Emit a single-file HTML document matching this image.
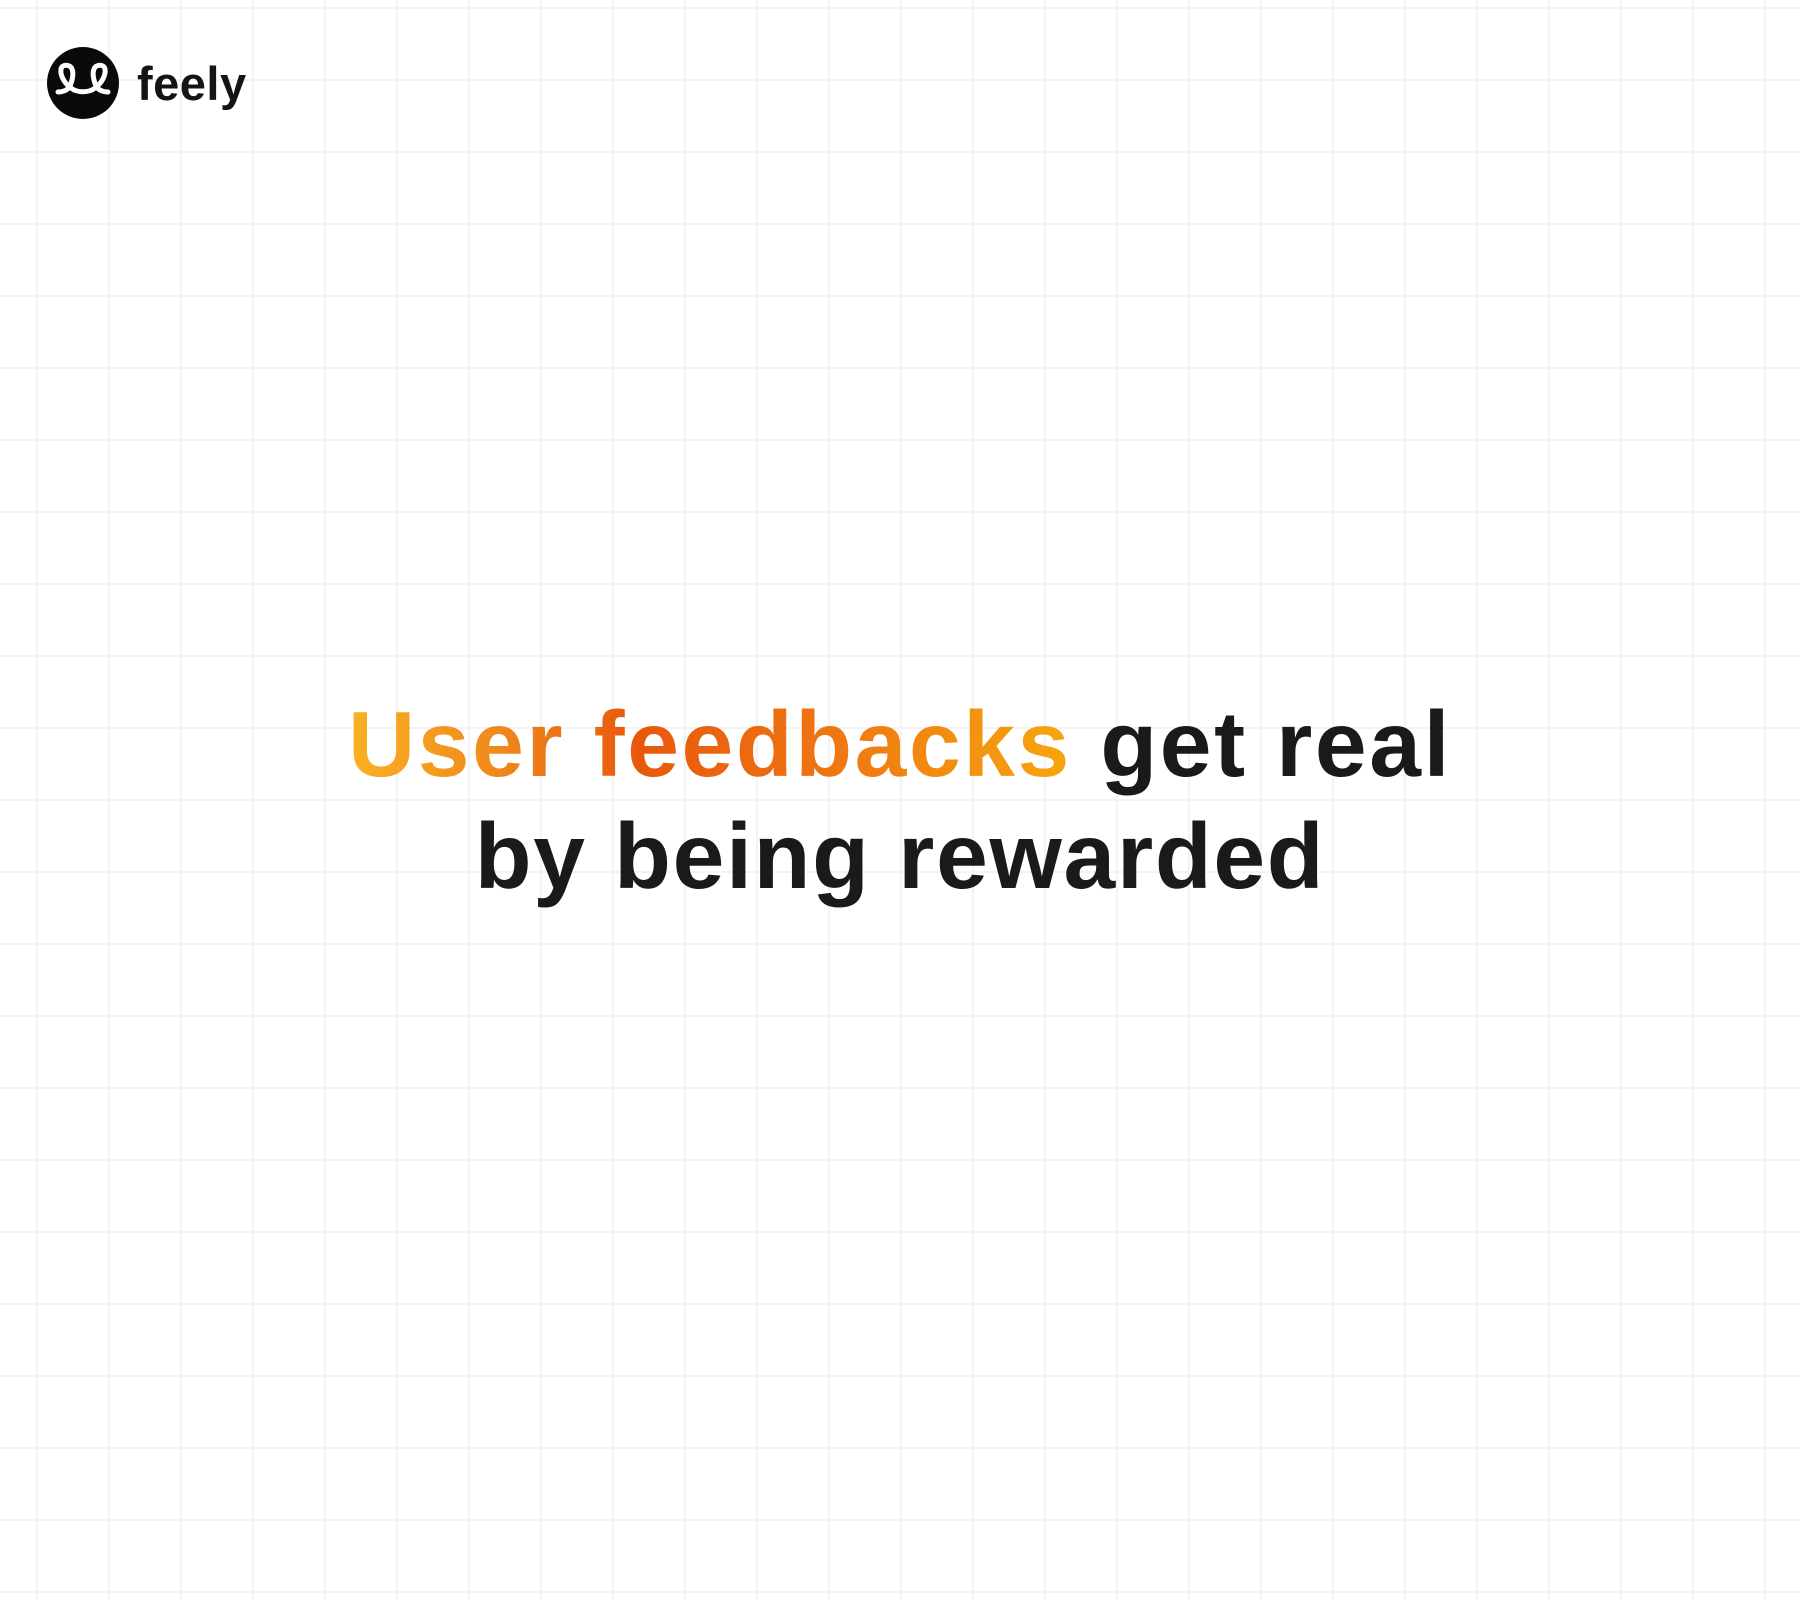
<!DOCTYPE html>
<html><head><style>
html,body{margin:0;width:1800px;height:1600px;overflow:hidden;background:#fff;}
body{position:relative;font-family:"Liberation Sans",sans-serif;
background-image:linear-gradient(to right,#f3f3f3 2px,transparent 2px),linear-gradient(to bottom,#f3f3f3 2px,transparent 2px);
background-size:72px 72px;background-position:36px 7px;}
.logo{position:absolute;left:47px;top:47px;}
.brand{position:absolute;left:137px;top:56px;font-size:47px;font-weight:bold;color:#141414;letter-spacing:0.5px;}
.h{position:absolute;left:0;width:1800px;top:688px;text-align:center;font-size:93px;font-weight:bold;color:#1a1a1a;line-height:112px;letter-spacing:2.6px;}
.l2{letter-spacing:1.7px;}
.g{background:linear-gradient(90deg,#fbb124 0%,#f08a1c 20%,#e8580c 40%,#ee7412 65%,#f6a60e 100%);-webkit-background-clip:text;background-clip:text;color:transparent;}
</style></head><body>
<svg class="logo" width="72" height="72" viewBox="0 0 72 72">
<circle cx="36" cy="36" r="36" fill="#0a0a0a"/>
<path d="M11 45 C16 45 21 43 23 39 C25 34 27 27 25 22 C23 17 15 17 14 22 C13 28 17 36 24 41 C30 46 42 46 48 41 C55 36 59 28 58 22 C57 17 49 17 47 22 C45 27 47 34 49 39 C51 43 56 45 61 45" fill="none" stroke="#fff" stroke-width="5" stroke-linecap="round" stroke-linejoin="round"/>
</svg>
<div class="brand">feely</div>
<div class="h"><span class="g">User feedbacks</span> get real<br><span class="l2">by being rewarded</span></div>
</body></html>
